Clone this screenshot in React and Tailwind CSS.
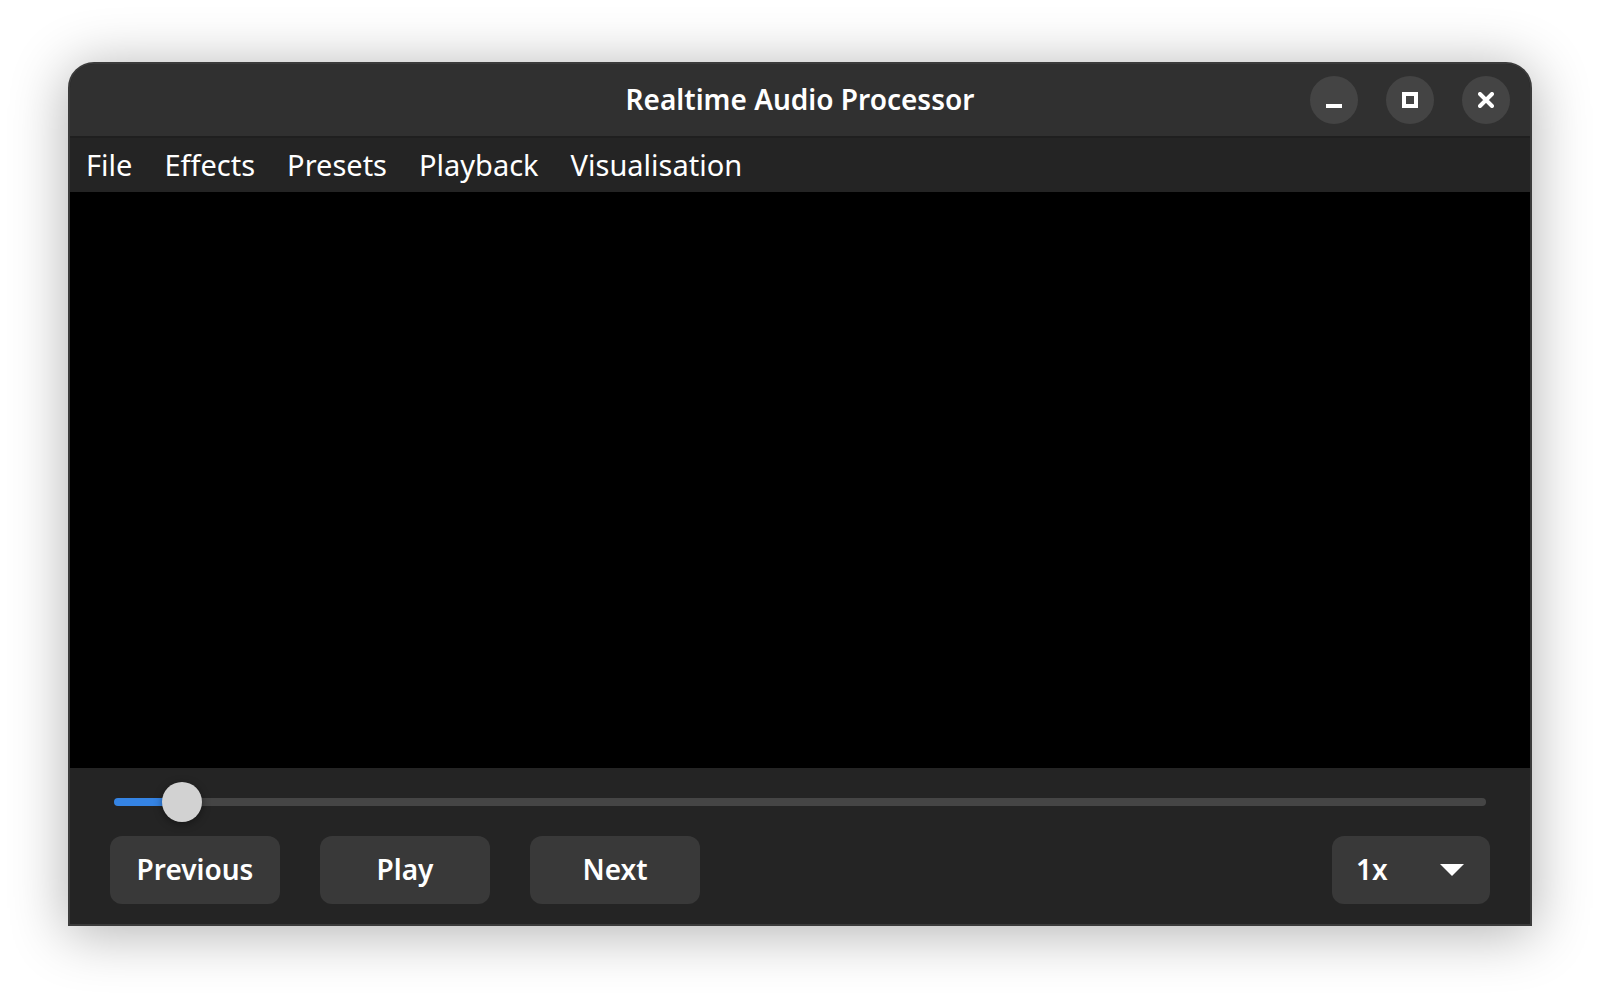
import { useState } from "react";

const menus = ["File", "Effects", "Presets", "Playback", "Visualisation"];
const transport = ["Previous", "Play", "Next"];
const THUMB = 40;

function WindowButton({ label, children }) {
  return (
    <button
      type="button"
      aria-label={label}
      className="flex size-12 items-center justify-center rounded-full bg-[#444444] text-white"
    >
      <svg viewBox="0 0 16 16" className="size-4" fill="none" stroke="currentColor" strokeWidth="4">
        {children}
      </svg>
    </button>
  );
}

function TitleBar() {
  return (
    <header className="grid h-[74px] grid-cols-[1fr_auto_1fr] items-center border-b-2 border-[#1f1f1f] bg-[#303030] px-5">
      <h1 className="col-start-2 pb-0.5 text-[28px] leading-9 font-semibold">Realtime Audio Processor</h1>
      <div className="flex justify-end gap-7">
        <WindowButton label="Minimise">
          <path d="M0 14H16" />
        </WindowButton>
        <WindowButton label="Maximise">
          <path d="M2 2H14V14H2Z" />
        </WindowButton>
        <WindowButton label="Close">
          <path d="M2 2L14 14M14 2L2 14" strokeLinecap="round" />
        </WindowButton>
      </div>
    </header>
  );
}

function MenuBar() {
  return (
    <nav className="flex h-[54px] items-center gap-8 px-4">
      {menus.map((name) => (
        <button key={name} type="button" className="text-[29px] leading-9">
          {name}
        </button>
      ))}
    </nav>
  );
}

function SeekBar() {
  const [value, setValue] = useState(36);
  const part = value / 1000;
  const stop = `calc(${part * 100}% + ${THUMB / 2 - part * THUMB}px)`;
  return (
    <input
      type="range"
      aria-label="Position"
      min="0"
      max="1000"
      value={value}
      onChange={(e) => setValue(Number(e.target.value))}
      style={{ "--fill": `linear-gradient(to right, #3584e4 ${stop}, #454545 ${stop})` }}
      className="mx-1 h-10 appearance-none bg-transparent [&::-webkit-slider-runnable-track]:h-2 [&::-webkit-slider-runnable-track]:rounded-full [&::-webkit-slider-runnable-track]:bg-(image:--fill) [&::-webkit-slider-thumb]:-mt-4 [&::-webkit-slider-thumb]:size-10 [&::-webkit-slider-thumb]:appearance-none [&::-webkit-slider-thumb]:rounded-full [&::-webkit-slider-thumb]:bg-[#d2d2d2] [&::-webkit-slider-thumb]:shadow-[0_2px_8px_rgba(0,0,0,0.4)]"
    />
  );
}

function SpeedSelect() {
  return (
    <div className="relative">
      <select
        aria-label="Playback speed"
        defaultValue="1x"
        className="h-[68px] w-[158px] appearance-none rounded-xl bg-[#393939] pb-0.5 pl-6 text-[28px] font-semibold text-white"
      >
        <option>0.5x</option>
        <option>1x</option>
        <option>2x</option>
      </select>
      <svg viewBox="0 0 24 12" className="pointer-events-none absolute top-7 right-[26px] h-3 w-6" fill="white">
        <path d="M0 0H24L12 12Z" />
      </svg>
    </div>
  );
}

export default function App() {
  return (
    <div className="flex min-h-screen flex-col bg-white px-[68px] pt-[62px] pb-[74px] font-['Noto_Sans','Open_Sans',sans-serif] text-white">
      <main className="flex flex-1 flex-col overflow-hidden rounded-t-[26px] border-2 border-[#3b3b3b] bg-[#242424] shadow-[0_6px_56px_2px_rgba(0,0,0,0.3)]">
        <TitleBar />
        <MenuBar />
        <section aria-label="Visualisation" className="flex-1 bg-black" />
        <footer className="flex flex-col gap-[14px] px-10 pt-[14px] pb-5">
          <SeekBar />
          <div className="flex items-center justify-between">
            <div className="flex gap-10">
              {transport.map((name) => (
                <button
                  key={name}
                  type="button"
                  className="h-[68px] w-[170px] rounded-xl bg-[#393939] pb-0.5 text-[28px] font-semibold"
                >
                  {name}
                </button>
              ))}
            </div>
            <SpeedSelect />
          </div>
        </footer>
      </main>
    </div>
  );
}
